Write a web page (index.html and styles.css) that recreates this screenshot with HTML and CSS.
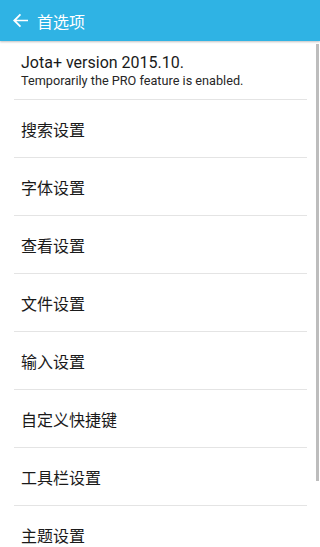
FILE: index.html
```html
<!DOCTYPE html>
<html>
<head>
<meta charset="utf-8">
<link rel="stylesheet" href="styles.css">
</head>
<body>
<div class="app">
  <header class="bar">
    <svg class="back" width="15" height="15" viewBox="0 0 16 16"><path d="M16 7.1H3.6l5-5L7.3.8 0 8l7.3 7.2 1.3-1.3-5-5H16z" fill="#fff"/></svg>
    <span class="title">首选项</span>
  </header>
  <div class="list">
    <div class="item info">
      <div class="main">Jota+ version 2015.10.</div>
      <div class="sub">Temporarily the PRO feature is enabled.</div>
    </div>
    <div class="item">搜索设置</div>
    <div class="item">字体设置</div>
    <div class="item">查看设置</div>
    <div class="item">文件设置</div>
    <div class="item">输入设置</div>
    <div class="item">自定义快捷键</div>
    <div class="item">工具栏设置</div>
    <div class="item">主题设置</div>
  </div>
  <div class="scroll"></div>
</div>
</body>
</html>
```
FILE: styles.css
```css
html, body { margin: 0; padding: 0; background: #fff; }
body { width: 320px; height: 547px; overflow: hidden; font-family: Roboto, "Noto Sans CJK SC", sans-serif; color: #212121; }
.app { position: relative; height: 547px; overflow: hidden; }
.bar { height: 41px; background: #2fb3e4; display: flex; align-items: center; padding-left: 13px; box-shadow: 0 1px 2px rgba(0,0,0,0.25); position: relative; z-index: 1; }
.back { display: block; }
.title { color: #fff; font-size: 16px; margin-left: 9px; font-family: "Noto Sans CJK SC", sans-serif; line-height: 1; }
.list { padding: 0 13px 0 14px; }
.item { height: 57px; border-bottom: 1px solid #e4e4e4; display: flex; align-items: center; padding-left: 7px; font-size: 16px; font-family: "Noto Sans CJK SC", sans-serif; color: #1a1a1a; }
.item.info { height: 58px; flex-direction: column; align-items: flex-start; justify-content: center; font-family: Roboto, sans-serif; }
.main { font-size: 16px; line-height: 20px; color: #1a1a1a; }
.sub { font-size: 12.7px; line-height: 15px; color: #262626; }
.scroll { position: absolute; left: 316px; top: 44px; width: 3px; height: 437px; background: #bdbdbd; }
```
